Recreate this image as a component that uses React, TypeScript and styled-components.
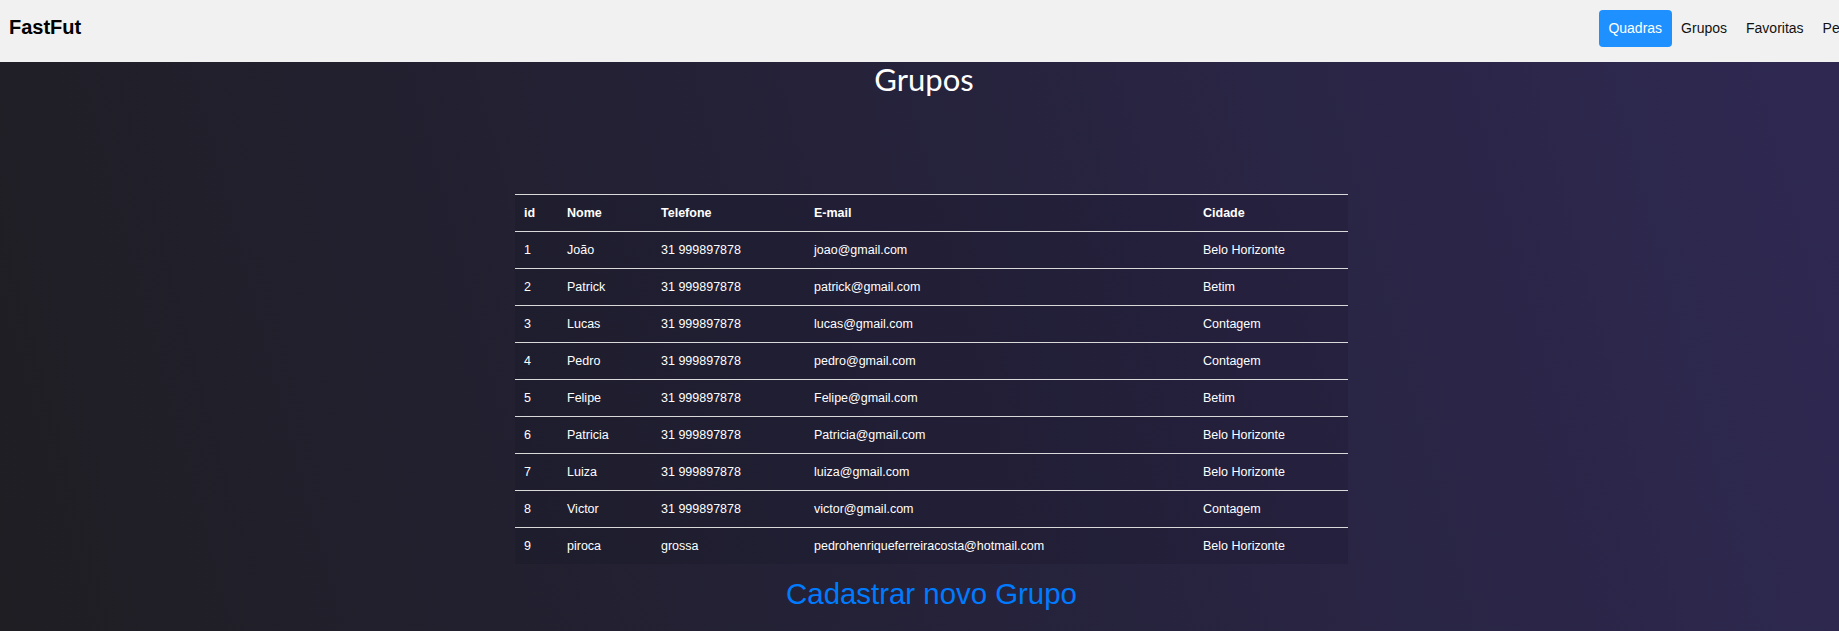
import React from "react";
import styled, { createGlobalStyle } from "styled-components";

const GlobalStyle = createGlobalStyle`
  html, body {
    margin: 0;
    padding: 0;
    overflow: hidden;
  }
  body {
    font-family: "Liberation Sans", Arial, sans-serif;
  }
`;

const Page = styled.div`
  display: flex;
  flex-direction: column;
  min-height: 100vh;
`;

const TopBar = styled.header`
  display: flex;
  align-items: flex-start;
  height: 62px;
  padding: 10px 0 0 9px;
  box-sizing: border-box;
  background: #f1f1f1;
  overflow: hidden;
`;

const Brand = styled.a`
  flex: 1;
  margin-top: 6px;
  font-size: 20px;
  font-weight: 700;
  line-height: 23px;
  color: #000;
  text-decoration: none;
`;

const NavMenu = styled.nav`
  display: flex;
  flex-shrink: 0;
  margin-right: -25px;
`;

const NavLink = styled.a<{ $active?: boolean }>`
  padding: 10px 9.5px;
  font-size: 14px;
  line-height: 17px;
  border-radius: 4px;
  color: ${(p) => (p.$active ? "#fff" : "#111")};
  background: ${(p) => (p.$active ? "#1e90ff" : "transparent")};
  text-decoration: none;
  cursor: pointer;
  white-space: nowrap;
`;

const Main = styled.main`
  flex: 1;
  display: flex;
  flex-direction: column;
  align-items: center;
  padding-left: 24px;
  background: linear-gradient(75deg, #1f1e23 0%, #25223a 50%, #2f2952 100%);
  color: #fff;
`;

const Title = styled.h1`
  margin: 0 15px 0 0;
  font-family: Lato, "Open Sans", sans-serif;
  font-size: 31px;
  font-weight: 400;
  line-height: 35px;
`;

const Table = styled.table`
  width: 833px;
  margin-top: 97px;
  border-collapse: separate;
  border-spacing: 0;
  background: rgba(10, 8, 25, 0.12);
  font-size: 12.5px;
  line-height: 14px;
`;

const HeadCell = styled.th<{ $w: number }>`
  width: ${(p) => p.$w}px;
  box-sizing: border-box;
  padding: 11px 9px;
  border-top: 1px solid #d9d9d9;
  text-align: left;
  font-weight: 700;
`;

const Cell = styled.td`
  padding: 11px 9px;
  border-top: 1px solid #d9d9d9;
  text-align: left;
`;

const NewLink = styled.a`
  margin-top: 13px;
  font-size: 29.4px;
  line-height: 34px;
  color: #007bff;
  text-decoration: none;
  cursor: pointer;
`;

const columns = [
  { label: "id", w: 43 },
  { label: "Nome", w: 94 },
  { label: "Telefone", w: 153 },
  { label: "E-mail", w: 389 },
  { label: "Cidade", w: 154 },
];

const groups = [
  [1, "João", "31 999897878", "joao@gmail.com", "Belo Horizonte"],
  [2, "Patrick", "31 999897878", "patrick@gmail.com", "Betim"],
  [3, "Lucas", "31 999897878", "lucas@gmail.com", "Contagem"],
  [4, "Pedro", "31 999897878", "pedro@gmail.com", "Contagem"],
  [5, "Felipe", "31 999897878", "Felipe@gmail.com", "Betim"],
  [6, "Patricia", "31 999897878", "Patricia@gmail.com", "Belo Horizonte"],
  [7, "Luiza", "31 999897878", "luiza@gmail.com", "Belo Horizonte"],
  [8, "Victor", "31 999897878", "victor@gmail.com", "Contagem"],
  [9, "piroca", "grossa", "pedrohenriqueferreiracosta@hotmail.com", "Belo Horizonte"],
];

const App: React.FC = () => {
  return (
    <Page>
      <GlobalStyle />
      <TopBar>
        <Brand href="#">FastFut</Brand>
        <NavMenu>
          <NavLink $active>Quadras</NavLink>
          <NavLink>Grupos</NavLink>
          <NavLink>Favoritas</NavLink>
          <NavLink>Perfil</NavLink>
        </NavMenu>
      </TopBar>
      <Main>
        <Title>Grupos</Title>
        <Table>
          <thead>
            <tr>
              {columns.map((c) => (
                <HeadCell key={c.label} $w={c.w}>
                  {c.label}
                </HeadCell>
              ))}
            </tr>
          </thead>
          <tbody>
            {groups.map((g) => (
              <tr key={g[0]}>
                {g.map((v, i) => (
                  <Cell key={i}>{v}</Cell>
                ))}
              </tr>
            ))}
          </tbody>
        </Table>
        <NewLink>Cadastrar novo Grupo</NewLink>
      </Main>
    </Page>
  );
};

export default App;
